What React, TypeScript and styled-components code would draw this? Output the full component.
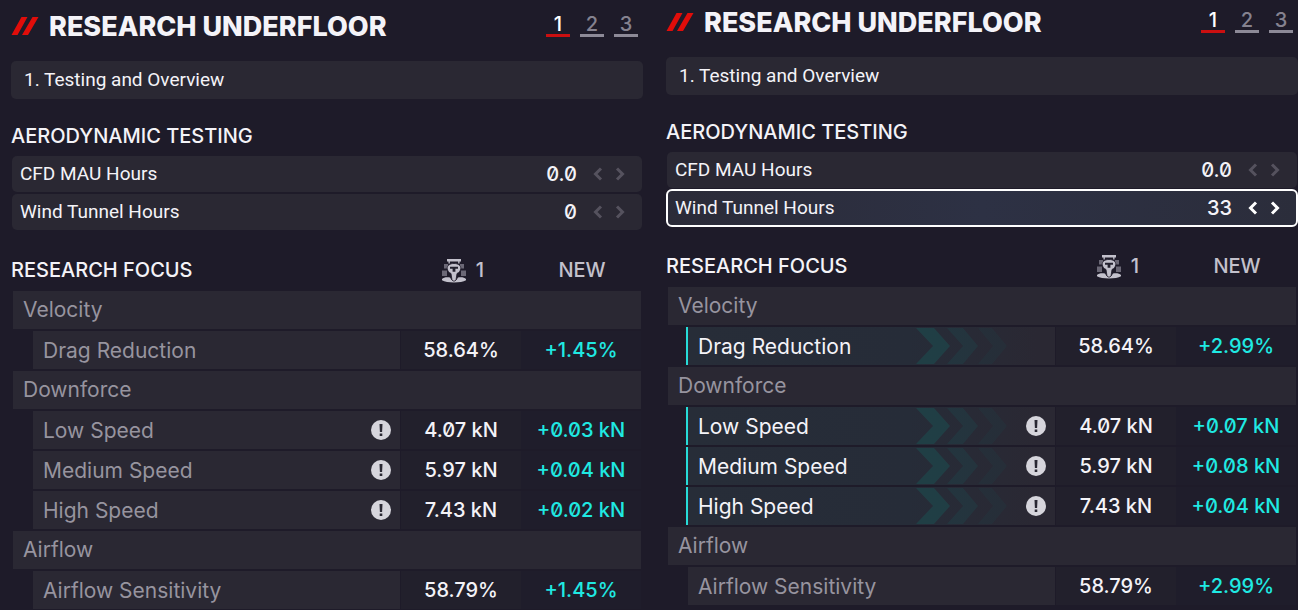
import React from 'react';
import styled, { createGlobalStyle, css } from 'styled-components';

const display = "Inter, 'Open Sans', sans-serif";
const body = "Roboto, 'Noto Sans', sans-serif";

const GlobalStyle = createGlobalStyle`
  *, *::before, *::after { box-sizing: border-box; }
  body { margin: 0; background: #1e1b29; }
`;

const Page = styled.main`
  display: grid;
  grid-template-columns: 1fr 1fr;
  column-gap: 23px;
  padding-left: 11px;
  color: #f4f3f8;
  font-family: ${display};
  font-size: 20px;
  font-feature-settings: 'zero';
`;

const Panel = styled.section<{ $raised?: boolean }>`
  padding-top: ${p => (p.$raised ? 7 : 11)}px;
  min-width: 0;
`;

const Header = styled.header`
  display: flex;
  align-items: flex-start;
  height: 32px;
  margin-bottom: 18px;
  padding-right: 5px;
`;

const Slashes = styled.svg`
  flex: none;
  width: 28px;
  height: 18px;
  margin: 6px 10px 0 0;
`;

const Title = styled.h1`
  flex: 1;
  margin: 0;
  font-size: 27px;
  font-weight: 800;
  line-height: 32px;
  white-space: nowrap;
`;

const Pager = styled.nav`
  display: flex;
  gap: 10px;
`;

const PageButton = styled.button<{ $current?: boolean }>`
  width: 24px;
  height: 26px;
  padding: 3px 0 0;
  border: 0;
  border-bottom: 3px solid ${p => (p.$current ? '#cb0f10' : '#8d8a97')};
  background: none;
  color: ${p => (p.$current ? '#ffffff' : '#85828f')};
  font: 500 20px/20px ${display};
`;

const Step = styled.div`
  height: 38px;
  padding-left: 13px;
  border-radius: 5px;
  background: #2a2833;
  font: 400 19px/38px ${body};
`;

const Heading = styled.h2`
  margin: 25px 0 8px;
  font-size: 20px;
  font-weight: 500;
  line-height: 24px;
`;

const Steppers = styled.div`
  display: grid;
  gap: 2px;
  margin: 0 1px;
`;

const StepperRow = styled.div<{ $selected?: boolean }>`
  display: flex;
  align-items: center;
  height: 36px;
  padding: 0 11px 0 8px;
  border-radius: 5px;
  background: #2a2833;
  ${p => p.$selected && css`
    background: linear-gradient(90deg, #2b2b38, #2d3144 50%, #2b2d3b);
    outline: 2px solid #ffffff;
    outline-offset: -1px;
  `}
`;

const StepperLabel = styled.label`
  flex: 1;
  font: 400 19px/36px ${body};
`;

const StepperValue = styled.input`
  width: 60px;
  margin-right: 10px;
  padding: 0;
  border: 0;
  background: none;
  color: #f4f3f8;
  font: 500 20px/36px ${display};
  font-feature-settings: inherit;
  text-align: right;
`;

const ArrowButton = styled.button<{ $lit?: boolean }>`
  display: grid;
  place-items: center;
  width: 22px;
  height: 36px;
  padding: 0;
  border: 0;
  background: none;
  color: ${p => (p.$lit ? '#ffffff' : '#55525e')};
`;

const Table = styled.table`
  width: 100%;
  margin-top: 22px;
  border-collapse: collapse;
  table-layout: fixed;
  font-weight: 500;

  th, td { padding: 0; }
`;

const NameColumn = styled.col``;
const CurrentColumn = styled.col` width: 120px; `;
const NewColumn = styled.col` width: 122px; `;

const ColumnTitle = styled.th<{ $start?: boolean }>`
  color: ${p => (p.$start ? '#f4f3f8' : '#c3c1cc')};
  font-weight: 500;
  line-height: 37px;
  text-align: ${p => (p.$start ? 'left' : 'center')};
`;

const TitleRow = styled.tr`
  height: 39px;

  && > th { padding-bottom: 2px; }
`;

const CarTitle = styled.span`
  display: flex;
  align-items: center;
  justify-content: center;
  gap: 10px;
  padding-left: 4px;
`;

const GroupBar = styled.div`
  height: 38px;
  margin: 0 2px 2px;
  padding-left: 10px;
  background: #2a2833;
  color: #97949f;
  font-size: 21px;
  font-weight: 400;
  line-height: 38px;
  text-align: left;
`;

const NameBar = styled.div<{ $active?: boolean }>`
  display: flex;
  align-items: center;
  height: 38px;
  margin: 0 1px 2px 22px;
  padding: 0 9px 0 10px;
  background: #2a2833;
  color: #97949f;
  font-size: 21px;
  font-weight: 400;
  text-align: left;
  ${p => p.$active && css`
    margin-left: 20px;
    border-left: 2px solid #27dcd8;
    background: linear-gradient(90deg, #272d38, #262c38 60%, #2a2833 95%);
    color: #f4f3f8;
  `}
`;

const Name = styled.span`
  flex: 1;
  white-space: nowrap;
`;

const AlertSlot = styled.span`
  display: flex;
  width: 20px;
  height: 20px;
  margin-left: 18px;
`;

const ValueBar = styled.div<{ $gain?: boolean }>`
  height: 38px;
  margin: 0 ${p => (p.$gain ? 2 : 0)}px 2px 0;
  background: ${p => (p.$gain ? '#1f1d2b' : '#22202c')};
  color: ${p => (p.$gain ? '#1fe9e2' : '#f4f3f8')};
  line-height: 38px;
  text-align: center;
`;

const SlashMark = () => (
  <Slashes viewBox="0 0 28 18" aria-hidden="true">
    <path d="M10.500 0h6L6.500 18h-6zM21.500 0h6L17 18h-6z" fill="#e10d0a" />
  </Slashes>
);

const Arrow = ({ back }: { back?: boolean }) => (
  <svg width="10" height="14" viewBox="0 0 10 14" fill="none" stroke="currentColor" strokeWidth="3" aria-hidden="true">
    <path d={back ? 'M8 1.5 2.5 7 8 12.5' : 'M2 1.5 7.500 7 2 12.5'} />
  </svg>
);

const CarIcon = () => (
  <svg width="24" height="24" viewBox="0 0 24 24" aria-hidden="true">
    <path d="M2 5h4v4.500H2zM18 5h4v4.500h-4zM0 11.500h5V17H0zM19 11.500h5V17h-5z" fill="#6b6876" />
    <path d="M5 0h14v2.600h-1.500V4.600h-1.300v-2H7.800v2H6.500v-2H5z" fill="#c3c1cc" />
    <path d="M0 20c1.500-1.600 5-2.200 8-1.400L9.500 21h5l1.500-2.400c3-.8 6.500-.2 8 1.400v1.200C21.500 22.500 17 23.500 12 23.500S2.500 22.500 0 21.200z" fill="#c3c1cc" />
    <path d="M12 4.500c4.200 0 6.800 2 6.800 4.700 0 2.600-1.800 4.300-3.800 5.300l-1 6.500-1 1h-2l-1-1-1-6.500c-2-1-3.800-2.700-3.800-5.300C5.200 6.500 7.800 4.500 12 4.500z" fill="#c3c1cc" stroke="#1e1b29" strokeWidth=".8" />
    <path d="M8 7.800h8v2h-2.600v3h-2.800v-3H8z" fill="#23212e" />
  </svg>
);

const AlertIcon = () => (
  <svg width="20" height="20" viewBox="0 0 20 20" role="img" aria-label="Warning">
    <circle cx="10" cy="10" r="10" fill="#d6d5dc" />
    <path d="M8.500 4h3l-.4 8H8.900zM8.700 13.500h2.600V16H8.700z" fill="#2a2833" />
  </svg>
);

const Trail = () => (
  <svg width="92" height="36" viewBox="0 0 92 36" fill="#16605f" aria-hidden="true">
    <path d="M0 0h18l16 18-16 18H0l17-18z" opacity=".36" />
    <path d="M31 0h16l15 18-15 18H31l16-18z" opacity=".2" />
    <path d="M62 0h14l15 18-15 18H62l15-18z" opacity=".1" />
  </svg>
);

type Stat = { name: string; current: string; gain: string; active?: boolean; alert?: boolean };
type Group = { name: string; stats: Stat[] };
type Hours = { name: string; value: string; selected?: boolean };

const makeGroups = (gains: string[], active: boolean): Group[] => [
  { name: 'Velocity', stats: [{ name: 'Drag Reduction', current: '58.64%', gain: gains[0], active }] },
  {
    name: 'Downforce',
    stats: [
      { name: 'Low Speed', current: '4.07 kN', gain: gains[1], active, alert: true },
      { name: 'Medium Speed', current: '5.97 kN', gain: gains[2], active, alert: true },
      { name: 'High Speed', current: '7.43 kN', gain: gains[3], active, alert: true },
    ],
  },
  { name: 'Airflow', stats: [{ name: 'Airflow Sensitivity', current: '58.79%', gain: gains[4] }] },
];

function ResearchPanel({ id, hours, groups, raised }: { id: string; hours: Hours[]; groups: Group[]; raised?: boolean }) {
  return (
    <Panel $raised={raised}>
      <Header>
        <SlashMark />
        <Title>RESEARCH UNDERFLOOR</Title>
        <Pager aria-label="Steps">
          <PageButton $current aria-current="step">1</PageButton>
          <PageButton>2</PageButton>
          <PageButton>3</PageButton>
        </Pager>
      </Header>
      <Step>1. Testing and Overview</Step>
      <Heading>AERODYNAMIC TESTING</Heading>
      <Steppers>
        {hours.map((h, i) => (
          <StepperRow key={h.name} $selected={h.selected}>
            <StepperLabel htmlFor={`${id}-${i}`}>{h.name}</StepperLabel>
            <StepperValue id={`${id}-${i}`} type="text" defaultValue={h.value} />
            <ArrowButton $lit={h.selected} aria-label={`Decrease ${h.name}`}><Arrow back /></ArrowButton>
            <ArrowButton $lit={h.selected} aria-label={`Increase ${h.name}`}><Arrow /></ArrowButton>
          </StepperRow>
        ))}
      </Steppers>
      <Table>
        <colgroup><NameColumn /><CurrentColumn /><NewColumn /></colgroup>
        <thead>
          <TitleRow>
            <ColumnTitle $start scope="col">RESEARCH FOCUS</ColumnTitle>
            <ColumnTitle scope="col"><CarTitle><CarIcon />1</CarTitle></ColumnTitle>
            <ColumnTitle scope="col">NEW</ColumnTitle>
          </TitleRow>
        </thead>
        {groups.map(g => (
          <tbody key={g.name}>
            <tr><th colSpan={3} scope="rowgroup"><GroupBar>{g.name}</GroupBar></th></tr>
            {g.stats.map(s => (
              <tr key={s.name}>
                <th scope="row">
                  <NameBar $active={s.active}>
                    <Name>{s.name}</Name>
                    {s.active && <Trail />}
                    <AlertSlot>{s.alert && <AlertIcon />}</AlertSlot>
                  </NameBar>
                </th>
                <td><ValueBar>{s.current}</ValueBar></td>
                <td><ValueBar $gain>{s.gain}</ValueBar></td>
              </tr>
            ))}
          </tbody>
        ))}
      </Table>
    </Panel>
  );
}

export default function App() {
  return (
    <>
      <GlobalStyle />
      <Page>
        <ResearchPanel
          id="before"
          hours={[{ name: 'CFD MAU Hours', value: '0.0' }, { name: 'Wind Tunnel Hours', value: '0' }]}
          groups={makeGroups(['+1.45%', '+0.03 kN', '+0.04 kN', '+0.02 kN', '+1.45%'], false)}
        />
        <ResearchPanel
          id="after"
          raised
          hours={[{ name: 'CFD MAU Hours', value: '0.0' }, { name: 'Wind Tunnel Hours', value: '33', selected: true }]}
          groups={makeGroups(['+2.99%', '+0.07 kN', '+0.08 kN', '+0.04 kN', '+2.99%'], true)}
        />
      </Page>
    </>
  );
}
